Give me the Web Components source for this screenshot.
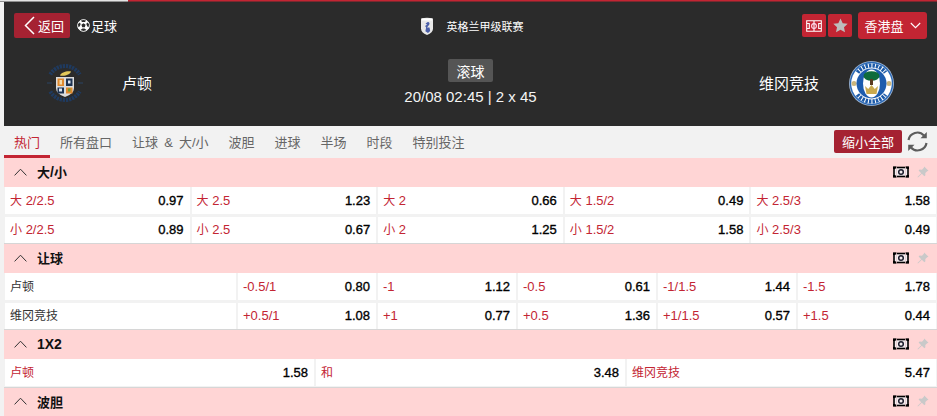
<!DOCTYPE html>
<html lang="zh"><head><meta charset="utf-8"><title>卢顿 vs 维冈竞技</title>
<style>
html,body{margin:0;padding:0;background:#f2f2f2;height:416px;overflow:hidden}
body{font:13px "Liberation Sans","Noto Sans CJK SC",Arial,sans-serif;color:#000}
</style></head><body>
<m-app>
  <m-loadbar slot="bar"></m-loadbar>
  <m-header></m-header>
  <m-tabs></m-tabs>
  <m-market title="大/小">
    <m-row cols="5">
      <m-cell label="大 2/2.5" value="0.97"></m-cell><m-cell label="大 2.5" value="1.23"></m-cell><m-cell label="大 2" value="0.66"></m-cell><m-cell label="大 1.5/2" value="0.49"></m-cell><m-cell label="大 2.5/3" value="1.58"></m-cell>
    </m-row>
    <m-row cols="5">
      <m-cell label="小 2/2.5" value="0.89"></m-cell><m-cell label="小 2.5" value="0.67"></m-cell><m-cell label="小 2" value="1.25"></m-cell><m-cell label="小 1.5/2" value="1.58"></m-cell><m-cell label="小 2.5/3" value="0.49"></m-cell>
    </m-row>
  </m-market>
  <m-market title="让球">
    <m-row cols="handicap">
      <m-cell label="卢顿" dark></m-cell><m-cell label="-0.5/1" value="0.80"></m-cell><m-cell label="-1" value="1.12"></m-cell><m-cell label="-0.5" value="0.61"></m-cell><m-cell label="-1/1.5" value="1.44"></m-cell><m-cell label="-1.5" value="1.78"></m-cell>
    </m-row>
    <m-row cols="handicap">
      <m-cell label="维冈竞技" dark></m-cell><m-cell label="+0.5/1" value="1.08"></m-cell><m-cell label="+1" value="0.77"></m-cell><m-cell label="+0.5" value="1.36"></m-cell><m-cell label="+1/1.5" value="0.57"></m-cell><m-cell label="+1.5" value="0.44"></m-cell>
    </m-row>
  </m-market>
  <m-market title="1X2">
    <m-row cols="3">
      <m-cell label="卢顿" value="1.58"></m-cell><m-cell label="和" value="3.48"></m-cell><m-cell label="维冈竞技" value="5.47"></m-cell>
    </m-row>
  </m-market>
  <m-market title="波胆"></m-market>
</m-app>
<script>
function def(name, css, html, init){
  customElements.define(name, class extends HTMLElement{
    connectedCallback(){
      if(this.shadowRoot) return;
      const r=this.attachShadow({mode:'open'});
      r.innerHTML='<style>'+css+'</style>'+(typeof html==='function'?html(this):html);
      if(init) init(this,r);
    }
  });
}
const cjk=(s,size)=>s.replace(/[\u4e00-\u9fff]+/g,m=>`<span style="font-size:${size}px">${m}</span>`);
def('m-app',':host{display:block;width:937px;height:416px;overflow:hidden;background:#f2f2f2}.w{padding-left:4px}','<slot name="bar"></slot><div class="w"><slot></slot></div>');
def('m-loadbar',':host{display:flex;height:2px}i{display:block;width:128px;background:linear-gradient(#e4e4e4 1px,#8f8f8f 1px)}b{display:block;flex:1;background:linear-gradient(#c32533 1px,#7a282f 1px)}','<i></i><b></b>');

const LUTON=`<svg width="46" height="46" viewBox="0 0 46 46"><path d="M8.300 14.500A17 17 0 0 1 37.700 14.500M8.300 31.500A17 17 0 0 0 37.700 31.500" fill="none" stroke="#1f3a5f" stroke-width="4" stroke-dasharray="2.200 .9"/><path d="M5 23h5M36 23h5" stroke="#2a4464" stroke-width="1.200"/><path d="M18 15.500c1-3 7-5 11-4-1 3-6 5-11 4z" fill="#e3c95a"/><path d="M14 17h18v11q0 6-9 9-9-3-9-9z" fill="#dcdcdc"/><rect x="15.500" y="18.500" width="6.500" height="7.500" fill="#e08a2e"/><rect x="24" y="18.500" width="6.500" height="7.500" fill="#1d3352"/><rect x="15.500" y="27.500" width="6.500" height="6" fill="#1d3352"/><rect x="24" y="27.500" width="6.500" height="6" fill="#e08a2e"/><path d="M17.500 20h2.500v4.500h-2.500z" fill="#f4d9a8"/><path d="M26 20.500h2.500v3H26z" fill="#dfe4ee"/><path d="M17 28.500h3v3h-3z" fill="#dfe4ee"/><path d="M26 28.500h2.500v3H26z" fill="#6d9a3a"/></svg>`;
const WIGAN=`<svg width="45" height="45" viewBox="0 0 45 45"><circle cx="22.500" cy="22.500" r="22.500" fill="#9fb6d3"/><circle cx="22.500" cy="22.500" r="21.700" fill="#2a68b5"/><circle cx="22.500" cy="22.500" r="20.300" fill="#fff"/><path d="M8.500 11.500A17.500 17.500 0 0 1 36.500 11.500M8.500 33.500A17.500 17.500 0 0 0 36.500 33.500" fill="none" stroke="#1c5aa8" stroke-width="4.200" stroke-dasharray="2.400 1"/><circle cx="5" cy="22.500" r="2.500" fill="#c9b57e"/><circle cx="40" cy="22.500" r="2.500" fill="#c9b57e"/><circle cx="22.500" cy="22.500" r="15" fill="#1d5cae"/><ellipse cx="22.500" cy="22.500" rx="8.500" ry="14" fill="#fff"/><ellipse cx="22.500" cy="15" rx="8" ry="4.800" fill="#0f6b3c"/><rect x="21" y="18" width="3" height="6" fill="#5b3b22"/><path d="M16 25l1.500 8h10L29 25l-3.200 3-3.300-4-3.300 4z" fill="#c9a94e"/></svg>`;
const SHIELD=`<svg width="14" height="19" viewBox="0 0 14 19"><path d="M1 1.500q6-1.500 12 0v10q0 4-6 6.500-6-2.500-6-6.500z" fill="#e8e8e8"/><path d="M2 1.500h10v2H2z" fill="#fff"/><path d="M7.800 5c2 0 2.200 2 1 3.200L7 10.500h2.500l.7 3.500-2.200 2-2.600-1.800.7-3.700-1-1.500L7 7.500 5.500 6.500z" fill="#4a5ea8"/></svg>`;
const BALL=`<svg width="13" height="13" viewBox="0 0 13 13"><circle cx="6.500" cy="6.500" r="5.800" fill="#fff" stroke="#fff"/><circle cx="6.500" cy="6.500" r="5" fill="#fff"/><path d="M6.500 4.300l2.100 1.500-.8 2.500H5.200l-.8-2.500z" fill="#2b2b2b"/><path d="M4 1.500l2.500-.6L9 1.500 8 3H5zM1 5l1.800-1.600.9 1.600-1 2.500L1.300 8zM12 5l-1.800-1.600-.9 1.600 1 2.500L11.700 8zM3.500 11l2-1.500h2L9.500 11l-3 1z" fill="#2b2b2b"/></svg>`;
const CHEV=`<svg width="11" height="19" viewBox="0 0 11 19"><path d="M10 1 1.500 9.500 10 18" fill="none" stroke="#fff" stroke-width="1.500"/></svg>`;
const PITCH=`<svg width="16" height="12" viewBox="0 0 16 12"><path d="M.7.700h14.600v10.600H.7zM8 .7v10.600M.7 3.500h2.600v5H.7M15.300 3.500h-2.600v5h2.600" fill="none" stroke="#fff" stroke-width="1.100"/><circle cx="8" cy="6" r="2.400" fill="none" stroke="#ffd9ee" stroke-width="1.100"/></svg>`;
const STAR=`<svg width="15" height="15" viewBox="0 0 24 24"><path d="M12 .8l3.500 7.400 8 1-5.900 5.500 1.600 8L12 18.700 4.800 22.700l1.600-8L.5 9.200l8-1z" fill="#bdbdbd"/></svg>`;
const DOWN=`<svg width="11" height="7" viewBox="0 0 11 7"><path d="M.8 1l4.700 4.700L10.200 1" fill="none" stroke="#fff" stroke-width="1.100"/></svg>`;

def('m-header',`:host{display:block;height:124px;background:#2b2b2b;color:#fff}
.top{display:grid;grid-template-columns:1fr auto 1fr;align-items:center;box-sizing:border-box;height:48px;padding:0 10px 1px 10px}
.l,.r{display:flex;align-items:center}
.r{justify-content:flex-end;}
.back{display:flex;align-items:center;box-sizing:border-box;width:56px;height:25px;background:#a52232;border-radius:2px;padding-left:10px;gap:3px}
.sport{display:flex;align-items:center;margin-left:7px;gap:1px}
.lg{display:flex;align-items:center;gap:13px;font-size:11px;margin-left:2px;margin-top:1px}
.ib{display:flex;align-items:center;justify-content:center;width:24px;height:23px;background:#c32533;border-radius:2px;margin-right:2px}
.odds{display:flex;align-items:center;justify-content:center;gap:6px;box-sizing:border-box;width:69px;height:27px;background:#c32533;border-radius:3px;font-size:13px;margin-left:4px}
.main{display:grid;grid-template-columns:1fr auto 1fr;height:76px}
.team{display:flex;align-items:center;height:66px;font-size:15px}
.team span{padding-bottom:2px}
.team.a{padding-left:38px;gap:34px}
.team.b{justify-content:flex-end;padding-right:43px;gap:30px}
.mid{display:flex;flex-direction:column;align-items:center;padding-top:9px}
.live{display:flex;align-items:center;justify-content:center;width:45px;height:23px;background:#555;border-radius:2px;font-size:14px}
.time{font-size:15px;line-height:18px;margin-top:6px;color:#f4f4f4}
svg{display:block}`,
`<div class="top"><div class="l"><div class="back">${CHEV}<span>返回</span></div><div class="sport">${BALL}<span>足球</span></div></div>
<div class="lg">${SHIELD}<span>英格兰甲级联赛</span></div>
<div class="r"><div class="ib">${PITCH}</div><div class="ib">${STAR}</div><div class="odds"><span>香港盘</span>${DOWN}</div></div></div>
<div class="main"><div class="team a">${LUTON}<span>卢顿</span></div>
<div class="mid"><div class="live">滚球</div><div class="time">20/08 02:45 | 2 x 45</div></div>
<div class="team b"><span>维冈竞技</span>${WIGAN}</div></div>`);

def('m-tabs',`:host{display:flex;height:32px;background:#f2f2f2;align-items:stretch;color:#666}
.t{display:flex;align-items:center;box-sizing:border-box;padding:1px 10px 0;height:32px;border-bottom:3px solid transparent;white-space:pre}
.t.on{color:#c32533;border-bottom-color:#c32533}
.sp{flex:1}
.btn{align-self:flex-start;margin-top:4px;display:flex;align-items:center;justify-content:center;width:68px;height:23px;background:#a52232;color:#fff;border-radius:2px}
svg{display:block;margin:5px 9px 0 5px}`,
`<div class="t on">热门</div><div class="t">所有盘口</div><div class="t" style="word-spacing:2.500px">让球 &amp; 大/小</div><div class="t">波胆</div><div class="t">进球</div><div class="t">半场</div><div class="t">时段</div><div class="t">特别投注</div><div class="sp"></div><div class="btn">缩小全部</div>
<svg width="21" height="21" viewBox="0 0 21 21"><path d="M1.500 9A9 9 0 0 1 17 4.500M19.500 12A9 9 0 0 1 4 16.500" fill="none" stroke="#5c5c5c" stroke-width="2.200"/><path d="M19.800 1v6.300h-6.300zM1.200 20v-6.300h6.300z" fill="#5c5c5c"/></svg>`);

def('m-market',`:host{display:block}
.h{display:flex;align-items:center;box-sizing:border-box;height:28.500px;padding:0 0 1px 10px;background:#ffd5d5;font-weight:700;font-size:14px}
.h .c{display:block;margin-right:10px}
.h .n{flex:1;color:#111}
.h .m{display:block;margin-right:8px}
.h .p{display:block;margin-right:8px}
.b{display:flex;flex-direction:column;}
:host(:not(:empty)) .b{border-bottom:1px solid #d6d6d6;padding-bottom:.5px;box-sizing:content-box}`,
el=>`<div class="h"><svg class="c" width="13" height="8" viewBox="0 0 13 8"><path d="M.6 7.400 6.500 1.200l5.900 6.200" fill="none" stroke="#333" stroke-width="1"/></svg><span class="n">${cjk(el.getAttribute('title'),13)}</span>
<svg class="m" width="16" height="12" viewBox="0 0 16 12"><rect x="1" y="1.500" width="14" height="9" fill="#f3ecee" stroke="#000" stroke-width="1.600"/><path d="M3.500 1v10M12.500 1v10" stroke="#e9c7cc" stroke-width="1" opacity=".7"/><path d="M1 3V1.500h2M13 1.500h2V3M15 9v1.500h-2M3 10.500H1V9" fill="none" stroke="#000" stroke-width="2"/><circle cx="8" cy="6" r="2.300" fill="none" stroke="#1c1c2c" stroke-width="1.500"/></svg>
<svg class="p" width="12" height="12" viewBox="0 0 12 12"><path d="M7.200.5 11.500 4.800 10.200 5.200 8.300 7l.1 2.300-1 1L4.800 7.700 1 11.400.5 11l3.700-3.800L1.600 4.600l1-1L5 3.700 6.800 1.800z" fill="#c9c9c9"/></svg></div><div class="b"><slot></slot></div>`);

def('m-row',`:host{display:grid;column-gap:2px;padding:.5px 1px 0 1px;height:27.500px;box-sizing:border-box;margin-bottom:2px;background:#f2f2f2}
:host(:last-child){margin-bottom:0}
:host(:not(:first-child)){height:26.500px}
:host([cols="5"]){grid-template-columns:repeat(5,1fr)}
:host([cols="handicap"]){grid-template-columns:231px repeat(5,1fr)}
:host([cols="3"]){grid-template-columns:repeat(3,1fr)}`,'<slot></slot>');

def('m-cell',`:host{display:flex;align-items:center;justify-content:space-between;background:#fff;padding:0 6px 0 5px;white-space:pre;color:#c32533;line-height:26px}
:host([dark]){color:#333}
.v{color:#000;font-size:13px;-webkit-text-stroke:.35px #000}`,
el=>`<span>${cjk(el.getAttribute('label'),12)}</span>${el.hasAttribute('value')?`<span class="v">${el.getAttribute('value')}</span>`:''}`);
</script>
</body></html>
